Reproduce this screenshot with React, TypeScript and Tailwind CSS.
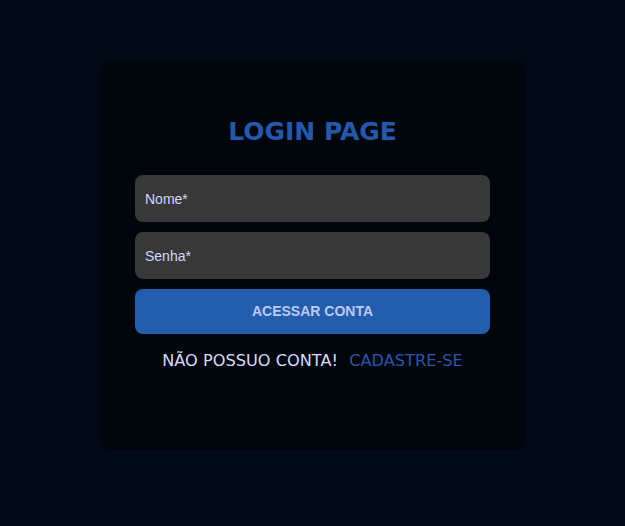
export default function App() {
  return (
    <div className="min-h-[526px] w-full bg-[#020a18] flex justify-center pt-[61px]">
      <div className="w-[425px] h-[389px] bg-[#01050c] rounded-[10px] flex flex-col items-center px-[35px] pt-[54px]">
        <h1 className="text-[25px] font-bold text-[#2259ae] leading-[34px] font-['DejaVu_Sans',sans-serif] mb-[26px]">
          LOGIN PAGE
        </h1>
        <div className="flex flex-col gap-[10px] w-full">
          <input
            placeholder="Nome*"
            className="h-[47px] w-full rounded-[8px] bg-[#383838] px-[10px] text-[14px] text-[#cdd8ff] placeholder:text-[#cdd8ff] outline-none font-['Liberation_Sans',sans-serif]"
          />
          <input
            placeholder="Senha*"
            type="password"
            className="h-[47px] w-full rounded-[8px] bg-[#383838] px-[10px] text-[14px] text-[#cdd8ff] placeholder:text-[#cdd8ff] outline-none font-['Liberation_Sans',sans-serif]"
          />
          <button className="h-[45px] w-full rounded-[8px] bg-[#225eab] text-[14px] font-bold text-[#bccaf2] font-['Liberation_Sans',sans-serif]">
            ACESSAR CONTA
          </button>
        </div>
        <p className="mt-[17px] text-[16.2px] leading-[20px] font-['DejaVu_Sans',sans-serif] text-[#d3dcff]">
          NÃO POSSUO CONTA!{" "}
          <a href="#" className="ml-[6px] text-[#2458ad]">
            CADASTRE-SE
          </a>
        </p>
      </div>
    </div>
  );
}
